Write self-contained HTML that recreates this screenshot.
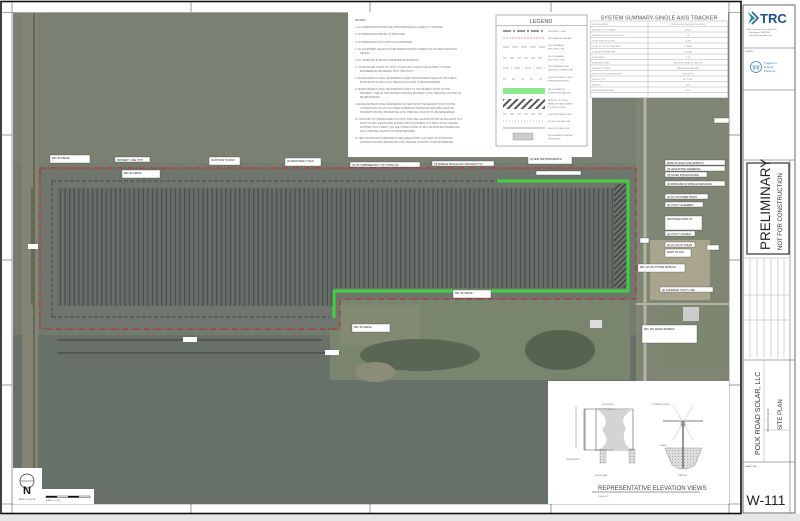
<!DOCTYPE html>
<html><head><meta charset="utf-8"><style>
html,body{margin:0;padding:0;background:#fff;}
svg{display:block;font-family:"Liberation Sans",sans-serif;}
</style></head><body>
<svg width="800" height="521" viewBox="0 0 800 521" xmlns="http://www.w3.org/2000/svg">
<defs>
<pattern id="rows" width="4.6" height="10" patternUnits="userSpaceOnUse">
<rect width="4.6" height="10" fill="#686d69"/>
<rect x="0" width="1.2" height="10" fill="#484e4c"/>
</pattern>
<pattern id="hatch" width="4" height="4" patternUnits="userSpaceOnUse" patternTransform="rotate(45)">
<rect width="4" height="4" fill="#6a706a"/><rect width="1" height="4" fill="#333"/>
</pattern>
<pattern id="lhatch" width="5" height="5" patternUnits="userSpaceOnUse" patternTransform="rotate(45)">
<rect width="5" height="5" fill="#fff"/><rect width="2" height="5" fill="#555"/>
</pattern>
<pattern id="dots" width="3" height="3" patternUnits="userSpaceOnUse">
<rect width="3" height="3" fill="#ddd"/><rect width="1" height="1" fill="#aaa"/>
</pattern>
</defs>
<rect width="800" height="521" fill="#fff"/>
<rect x="0" y="514" width="800" height="7" fill="#e6e6e6"/>
<rect x="1" y="1.5" width="740" height="512" fill="none" stroke="#111" stroke-width="1.6"/>
<line x1="12" y1="2" x2="12" y2="513" stroke="#555" stroke-width="0.6"/>
<line x1="1" y1="12.5" x2="741" y2="12.5" stroke="#555" stroke-width="0.6"/>
<line x1="1" y1="504" x2="741" y2="504" stroke="#555" stroke-width="0.6"/>
<line x1="729" y1="2" x2="729" y2="513" stroke="#555" stroke-width="0.6"/>
<g stroke="#555" stroke-width="0.6">
<line x1="191" y1="2" x2="191" y2="12"/><line x1="370" y1="2" x2="370" y2="12"/><line x1="551" y1="2" x2="551" y2="12"/>
<line x1="191" y1="504" x2="191" y2="513"/><line x1="370" y1="504" x2="370" y2="513"/><line x1="551" y1="504" x2="551" y2="513"/>
<line x1="1" y1="135" x2="12" y2="135"/><line x1="1" y1="260" x2="12" y2="260"/><line x1="1" y1="385" x2="12" y2="385"/>
<line x1="729" y1="135" x2="741" y2="135"/><line x1="729" y1="260" x2="741" y2="260"/><line x1="729" y1="385" x2="741" y2="385"/>
</g>
<rect x="13" y="13" width="716" height="491" fill="#757c6e"/>
<rect x="13" y="13" width="716" height="150" fill="#7b8172"/>
<rect x="13" y="335" width="716" height="169" fill="#67716a"/>
<rect x="330" y="300" width="300" height="80" fill="#7a8570"/>
<rect x="340" y="305" width="80" height="40" fill="#828a72"/>
<ellipse cx="420" cy="355" rx="60" ry="16" fill="#586653"/>
<ellipse cx="560" cy="350" rx="35" ry="20" fill="#55634f"/>
<ellipse cx="375" cy="372" rx="20" ry="10" fill="#8c8c7a"/>
<rect x="636" y="13" width="93" height="491" fill="#808674"/>
<rect x="650" y="240" width="60" height="60" fill="#a9a58f"/>
<rect x="660" y="310" width="69" height="60" fill="#7d876f"/>
<rect x="22" y="13" width="16" height="491" fill="#838572"/>
<line x1="34" y1="13" x2="34" y2="504" stroke="#5b6058" stroke-width="1.5"/>
<line x1="645" y1="13" x2="645" y2="504" stroke="#b4b4a4" stroke-width="3"/>
<line x1="636" y1="304" x2="729" y2="304" stroke="#b4b4a4" stroke-width="2"/>
<rect x="590" y="320" width="12" height="8" fill="#ddd"/>
<rect x="683" y="307" width="16" height="14" fill="#ccc"/>
<rect x="40" y="168" width="596" height="131" fill="#70756e"/>
<rect x="40" y="299" width="300" height="31" fill="#70756e"/>
<rect x="57" y="188" width="277" height="118" fill="url(#rows)"/>
<rect x="334" y="188" width="280" height="100" fill="url(#rows)"/>
<rect x="614" y="184" width="14" height="104" fill="url(#hatch)"/>
<g stroke="#222" stroke-width="0.5" stroke-dasharray="4 2">
<line x1="52" y1="181" x2="628" y2="181"/>
<line x1="52" y1="181" x2="52" y2="317"/>
<line x1="52" y1="317" x2="330" y2="317"/>
</g>
<path d="M497 181 H628 V291 H334 V318" fill="none" stroke="#3fd23f" stroke-width="3"/>
<path d="M40 168 H636 V299 H340 V329 H40 Z" fill="none" stroke="#c0272d" stroke-width="1" stroke-dasharray="6 2 1 2"/>
<g stroke="#111" stroke-width="0.5">
<line x1="32" y1="188" x2="32" y2="305"/><line x1="57" y1="340" x2="322" y2="340"/>
<line x1="57" y1="353" x2="340" y2="353"/>
</g>
<g font-size="2.6" fill="#222">
<rect x="28" y="244" width="10" height="5" fill="#fff"/>
<rect x="183" y="337" width="14" height="5" fill="#fff"/>
<rect x="325" y="350" width="14" height="5" fill="#fff"/>
</g>
<g fill="#fff" stroke="#333" stroke-width="0.3">
<rect x="50" y="155" width="40" height="8"/><rect x="115" y="157" width="35" height="5"/>
<rect x="122" y="170" width="38" height="8"/><rect x="209" y="157" width="31" height="8"/>
<rect x="285" y="158" width="36" height="8"/><rect x="350" y="162" width="70" height="5"/>
<rect x="432" y="161" width="62" height="5"/><rect x="528" y="156" width="44" height="8"/>
<rect x="536" y="171" width="45" height="4"/><rect x="352" y="324" width="38" height="8"/>
<rect x="453" y="290" width="38" height="8"/>
<rect x="665" y="160" width="60" height="5"/><rect x="665" y="166" width="60" height="5"/>
<rect x="665" y="172" width="42" height="5"/><rect x="665" y="181" width="60" height="5"/>
<rect x="665" y="194" width="43" height="5"/><rect x="665" y="202" width="38" height="5"/>
<rect x="665" y="216" width="37" height="14"/><rect x="665" y="231" width="30" height="5"/>
<rect x="665" y="242" width="30" height="5"/><rect x="665" y="249" width="26" height="8"/>
<rect x="638" y="264" width="47" height="8"/><rect x="660" y="287" width="53" height="5"/>
<rect x="642" y="325" width="55" height="18"/>
<rect x="714" y="118" width="15" height="5"/><rect x="707" y="245" width="12" height="5"/>
<rect x="640" y="238" width="9" height="5"/>
</g>
<g font-size="2.4" fill="#222">
<text x="52" y="159">MIN. 50' FENCE</text><text x="124" y="174">MIN. 50' FENCE</text>
<text x="117" y="161">PROPERTY LINE (TYP)</text><text x="211" y="161">30-35' ROW TO ROW</text>
<text x="287" y="162">(N) PROPOSED 7' HIGH</text><text x="352" y="166">(N) DC COMBINER BOX, TYP. (TOTAL XX)</text>
<text x="434" y="165">(N) MODULE SINGLE AXIS TRACKER (TYP)</text><text x="530" y="160">(2) NEW SWITCHBOARDS &amp;</text>
<text x="354" y="328">MIN. 50' FENCE</text><text x="455" y="294">MIN. 50' FENCE</text>
<text x="667" y="164">EDGE OF ROAD LINE (APPROX.)</text><text x="667" y="170">(N) VEGETATIVE SCREENING</text>
<text x="667" y="176">(N) GATED SITE ENTRANCE</text><text x="667" y="185">(N) IMPROVED 20' WIDE ACCESS ROAD</text>
<text x="667" y="198">(4) (N) CUSTOMER POLES</text><text x="667" y="206">(N) UTILITY EASEMENT</text>
<text x="667" y="220">PROPOSED POINT OF</text><text x="667" y="235">(N) UTILITY CONDUIT</text>
<text x="667" y="246">(4) (N) UTILITY POLES</text><text x="667" y="253">RIGHT OF WAY</text>
<text x="640" y="268">MIN. 175-25' SYSTEM SETBACK</text><text x="662" y="291">(E) OVERHEAD UTILITY LINE</text>
<text x="644" y="330">MIN. 150' FENCE SETBACK</text>
</g>
<rect x="348" y="12" width="244" height="145" fill="#fff"/>
<text x="355" y="21" font-size="3" fill="#444">NOTES:</text>
<g font-size="2.4" fill="#777">
<text x="355" y="28">1.  ALL DIMENSIONS SHOWN ARE APPROXIMATE AND SUBJECT TO CHANGE.</text>
<text x="355" y="35">2.  NO PERMANENT PARKING IS PROPOSED.</text>
<text x="355" y="43">3.  NO PERMANENT SITE LIGHTING IS PROPOSED.</text>
<text x="355" y="50">4.  ALL EQUIPMENT SELECTION AND SPECIFICATIONS SUBJECT TO CHANGE WITH FINAL</text>
<text x="360" y="54">DESIGN.</text>
<text x="355" y="61">5.  ALL SETBACKS IN DESIGN ARE MINIMUM SETBACKS.</text>
<text x="355" y="68">6.  LOCATION AND COUNT OF UTILITY POLES ARE TYPICAL AND SUBJECT TO FINAL</text>
<text x="360" y="72">ENGINEERING AND DESIGN WITH THE UTILITY.</text>
<text x="355" y="79">7.  FENCE SETBACK SHALL BE MINIMUM 25 FEET FROM NEAREST EDGE OF THE PUBLIC</text>
<text x="360" y="83">ROAD RIGHT OF WAY (AHJ). PRECISE LOCATION TO BE DETERMINED.</text>
<text x="355" y="90">8.  FENCE SETBACK SHALL BE MINIMUM 50 FEET TO THE NEAREST POINT ON THE</text>
<text x="360" y="94">PROPERTY LINE OF THE NONPARTICIPATING PROPERTY (AHJ). PRECISE LOCATION TO</text>
<text x="360" y="98">BE DETERMINED.</text>
<text x="355" y="105">9.  FENCE SETBACK SHALL BE MINIMUM 150 FEET FROM THE NEAREST POINT ON THE</text>
<text x="360" y="109">OUTSIDE WALL OF ANY OCCUPIED COMMUNITY BUILDINGS AND DWELLINGS ON</text>
<text x="360" y="113">NONPARTICIPATING PROPERTIES (AHJ). PRECISE LOCATION TO BE DETERMINED.</text>
<text x="355" y="120">10. THE POINT OF INTERCONNECTION (POI) SHALL BE LOCATED WITHIN OR ADJACENT TO A</text>
<text x="360" y="124">RIGHT OF WAY OR EXISTING POWER LINE AS POSSIBLE, BUT SHALL IN NO CASE BE</text>
<text x="360" y="128">FURTHER THAN TWENTY (20) FEET FROM A ROAD OF WAY OR EXISTING POWER LINE</text>
<text x="360" y="132">(AHJ). PRECISE LOCATION TO BE DETERMINED.</text>
<text x="355" y="139">11. NEW VEGETATIVE SCREENING IS REQUIRED WITHIN 1,000 FEET OF AN EXISTING</text>
<text x="360" y="143">NONPARTICIPATING RESIDENCE (AHJ). PRECISE LOCATION TO BE DETERMINED.</text>
</g>
<rect x="496" y="15" width="91" height="131" fill="#fff" stroke="#666" stroke-width="0.5"/>
<text x="541" y="23" font-size="5.5" fill="#555" text-anchor="middle">LEGEND</text>
<line x1="496" y1="25.5" x2="587" y2="25.5" stroke="#666" stroke-width="0.4"/>
<g stroke-width="0.6" fill="none">
<line x1="503" y1="31" x2="545" y2="31" stroke="#333" stroke-dasharray="8 2 2 2" stroke-width="0.9"/>
<line x1="503" y1="38" x2="545" y2="38" stroke="#d33" stroke-dasharray="2 1"/>
<line x1="503" y1="47" x2="545" y2="47" stroke="#777" stroke-dasharray="6 3"/>
<line x1="503" y1="58" x2="545" y2="58" stroke="#777" stroke-dasharray="4 3"/>
<line x1="503" y1="68" x2="545" y2="68" stroke="#777" stroke-dasharray="6 2 1 2"/>
<line x1="503" y1="79" x2="545" y2="79" stroke="#777" stroke-dasharray="3 6"/>
<line x1="503" y1="114" x2="545" y2="114" stroke="#777" stroke-dasharray="4 3"/>
<line x1="503" y1="121" x2="545" y2="121" stroke="#777" stroke-dasharray="1 2"/>
<line x1="503" y1="128" x2="545" y2="128" stroke="#555"/>
</g>
<rect x="503" y="88" width="42" height="6" fill="#8be88b"/>
<rect x="503" y="99" width="42" height="10" fill="url(#lhatch)"/>
<rect x="513" y="133" width="20" height="7" fill="#ccc" stroke="#888" stroke-width="0.4"/>
<g font-size="2.2" fill="#777">
<text x="548" y="32">PROPERTY LINE</text><text x="548" y="39">SITE AREA BOUNDARY</text>
<text x="548" y="46">(N) OVERHEAD</text><text x="548" y="49.5">ELECTRIC LINE</text>
<text x="548" y="57">(E) OVERHEAD</text><text x="548" y="60.5">ELECTRIC LINE</text>
<text x="548" y="67">(N) UNDERGROUND</text><text x="548" y="70.5">MEDIUM VOLTAGE LINE</text>
<text x="548" y="78">(N) PROPOSED 7' HIGH</text><text x="548" y="81.5">PERIMETER FENCE</text>
<text x="548" y="90">(N) VEGETATIVE</text><text x="548" y="93.5">SCREENING (AHJ/UP)</text>
<text x="548" y="101">APPROX. 30' X 800'</text><text x="548" y="104.5">PANEL SETBACK AREA</text><text x="548" y="108">TO FENCE (SUP)</text>
<text x="548" y="115">FENCE SETBACK LINE</text><text x="548" y="122">EDGE OF ROAD LINE</text>
<text x="548" y="129">RIGHT OF WAY LINE</text>
<text x="548" y="136">(E) NONPARTICIPATING</text><text x="548" y="139.5">RESIDENCE</text>
</g>
<rect x="590" y="12" width="138" height="86" fill="#fff"/>
<text x="659" y="19.5" font-size="5.6" fill="#555" text-anchor="middle">SYSTEM SUMMARY-SINGLE AXIS TRACKER</text>
<g stroke="#999" stroke-width="0.4">
<rect x="590.5" y="21" width="137" height="76.5" fill="none"/>
<line x1="648" y1="21" x2="648" y2="97.5"/>
<line x1="590" y1="26.5" x2="728" y2="26.5"/><line x1="590" y1="32" x2="728" y2="32"/>
<line x1="590" y1="37.5" x2="728" y2="37.5"/><line x1="590" y1="43" x2="728" y2="43"/>
<line x1="590" y1="48.5" x2="728" y2="48.5"/><line x1="590" y1="54" x2="728" y2="54"/>
<line x1="590" y1="59.5" x2="728" y2="59.5"/><line x1="590" y1="65" x2="728" y2="65"/>
<line x1="590" y1="70.5" x2="728" y2="70.5"/><line x1="590" y1="76" x2="728" y2="76"/>
<line x1="590" y1="81.5" x2="728" y2="81.5"/><line x1="590" y1="87" x2="728" y2="87"/>
<line x1="590" y1="92.5" x2="728" y2="92.5"/>
</g>
<g font-size="2" fill="#888">
<text x="592" y="25">MODULE MODEL</text><text x="592" y="30.5">MODULE STC DC RATING</text><text x="592" y="36">MODULES PER SOURCE CIRCUIT</text>
<text x="592" y="41.5">TOTAL MODULE COUNT</text><text x="592" y="47">TOTAL STC DC SYSTEM SIZE</text><text x="592" y="52.5">TOTAL AC SYSTEM SIZE</text>
<text x="592" y="58">DC/AC RATIO</text><text x="592" y="63.5">INVERTER MODEL</text><text x="592" y="69">RACKING SYSTEM</text>
<text x="592" y="74.5">ROW TO ROW SPACING [GCR]</text><text x="592" y="80">MODULE TILT</text><text x="592" y="85.5">AZIMUTH</text>
<text x="592" y="91">SITE AREA (ACREAGE)</text>
<g text-anchor="middle"><text x="688" y="25">JINKO SOLAR JKM-580N-72HL4-BDV</text><text x="688" y="30.5">580 W</text><text x="688" y="36">28</text>
<text x="688" y="41.5">13,832</text><text x="688" y="47">7.73 MW</text><text x="688" y="52.5">5.00 MW</text><text x="688" y="58">1.55</text>
<text x="688" y="63.5">(40) SOLECTRIA XGI 1500-125</text><text x="688" y="69">SINGLE AXIS TRACKER</text><text x="688" y="74.5">30.65' [37%]</text>
<text x="688" y="80">60° TO 60°</text><text x="688" y="85.5">180°</text><text x="688" y="91">36.1 ±</text></g>
</g>
<rect x="548" y="381" width="181" height="123" fill="#fff"/>
<path d="M584 409 L612 409 L612 450 L584 450 Z" fill="#fff" stroke="#555" stroke-width="0.5"/>
<line x1="585" y1="409" x2="585" y2="450" stroke="#555" stroke-width="0.6"/>
<line x1="576" y1="406" x2="576" y2="448" stroke="#555" stroke-width="0.4"/>
<rect x="600" y="449" width="6" height="14" fill="url(#dots)" stroke="#777" stroke-width="0.3"/>
<rect x="629" y="449" width="6" height="14" fill="url(#dots)" stroke="#777" stroke-width="0.3"/>
<line x1="633" y1="409" x2="633" y2="450" stroke="#555" stroke-width="0.6"/>
<line x1="595" y1="409" x2="633" y2="409" stroke="#555" stroke-width="0.6"/>
<line x1="595" y1="450" x2="633" y2="450" stroke="#555" stroke-width="0.6"/>
<path d="M596 409 Q612 418 602 430 Q612 442 600 449 L630 449 Q620 440 626 428 Q618 418 632 410 Z" fill="#d4d4d4"/>
<line x1="596" y1="409" x2="596" y2="450" stroke="#555" stroke-width="0.6"/>
<path d="M665 448 L702 448 L695 465 Q683 473 672 465 Z" fill="url(#dots)" stroke="#777" stroke-width="0.4"/>
<line x1="663" y1="421" x2="703" y2="421" stroke="#555" stroke-width="0.8"/>
<line x1="683" y1="421" x2="683" y2="468" stroke="#555" stroke-width="1.2"/>
<circle cx="683" cy="424" r="2" fill="none" stroke="#555" stroke-width="0.6"/>
<g stroke="#888" stroke-width="0.4" stroke-dasharray="2 1"><line x1="673" y1="405" x2="693" y2="440"/><line x1="693" y1="405" x2="673" y2="440"/></g>
<g font-size="1.8" fill="#666"><text x="602" y="405">POSTS EMBT</text><text x="652" y="405">4" DIAMETER WOOD</text>
<text x="566" y="460">TENSION WIRE</text><text x="595" y="476">FENCE DETAIL</text><text x="678" y="476">TRACKER</text><text x="660" y="446">GRADE</text></g>
<text x="598" y="490" font-size="6" fill="#444">REPRESENTATIVE ELEVATION VIEWS</text>
<line x1="592" y1="492" x2="700" y2="492" stroke="#333" stroke-width="0.6"/>
<text x="598" y="497" font-size="1.8" fill="#666">SCALE: NTS</text>
<rect x="13" y="468" width="29" height="36" fill="#fff"/>
<circle cx="27" cy="481" r="7" fill="none" stroke="#333" stroke-width="0.7"/>
<line x1="20" y1="481" x2="34" y2="481" stroke="#333" stroke-width="0.5"/>
<text x="27" y="494" font-size="11" fill="#111" text-anchor="middle" font-weight="bold">N</text>
<text x="27" y="500" font-size="2" fill="#444" text-anchor="middle">APPROX. NORTH</text>
<rect x="42" y="489" width="52" height="15" fill="#fff"/>
<rect x="46" y="496" width="44" height="1.5" fill="#fff" stroke="#111" stroke-width="0.4"/>
<rect x="46" y="496" width="11" height="1.5" fill="#111"/><rect x="68" y="496" width="11" height="1.5" fill="#111"/>
<text x="46" y="501" font-size="1.8" fill="#444">SCALE: 1" = 100'</text>
<rect x="743" y="5" width="52" height="508" fill="#fff" stroke="#444" stroke-width="0.8"/>
<g stroke="#555" stroke-width="0.5">
<line x1="743" y1="48" x2="795" y2="48"/><line x1="743" y1="90" x2="795" y2="90"/>
<line x1="743" y1="160" x2="795" y2="160"/><line x1="743" y1="360" x2="795" y2="360"/>
<line x1="743" y1="462" x2="795" y2="462"/>
<line x1="790" y1="160" x2="790" y2="513"/>
</g>
<rect x="747" y="163" width="42" height="91" fill="#fff" stroke="#333" stroke-width="1.2"/>
<text transform="translate(770 250) rotate(-90)" font-size="13.5" fill="#222">PRELIMINARY</text>
<text transform="translate(782 250) rotate(-90)" font-size="6" fill="#333">NOT FOR CONSTRUCTION</text>
<g stroke="#777" stroke-width="0.3">
<line x1="743" y1="258" x2="790" y2="258"/>
<line x1="750" y1="258" x2="750" y2="358"/><line x1="757" y1="258" x2="757" y2="358"/>
<line x1="764" y1="258" x2="764" y2="358"/><line x1="771" y1="258" x2="771" y2="358"/>
<line x1="778" y1="258" x2="778" y2="358"/><line x1="784" y1="258" x2="784" y2="358"/>
<line x1="743" y1="295" x2="790" y2="295"/><line x1="743" y1="320" x2="790" y2="320"/>
<line x1="764" y1="430" x2="790" y2="430"/><line x1="764" y1="360" x2="764" y2="462"/>
</g>
<path d="M748 12 L755 18 L748 24 L751 18 Z" fill="#1b8f8a"/>
<path d="M752 12 L758 18 L752 24" fill="none" stroke="#2a5ea8" stroke-width="1.6"/>
<text x="760" y="23" font-size="13" font-weight="bold" fill="#1d4e92">TRC</text>
<g font-size="2" fill="#666"><text x="747" y="30">1865 Commerce Drive, Suite 100</text><text x="749" y="33">Sacramento, CA 95834</text><text x="749" y="36">www.TRCcompanies.com</text></g>
<text x="745" y="52" font-size="2.2" fill="#444">CLIENT</text>
<circle cx="756" cy="67" r="5.5" fill="none" stroke="#3a7fc1" stroke-width="0.8"/>
<path d="M752 66 H760 M753 68 H759 M754 66 V70 M758 66 V70" stroke="#3a7fc1" stroke-width="0.6"/>
<g font-size="3" fill="#3a7fc1"><text x="764" y="64">Trajectory</text><text x="764" y="68">Energy</text><text x="764" y="72">Partners</text></g>
<text transform="translate(760 455) rotate(-90)" font-size="7" fill="#333">POLK ROAD SOLAR, LLC</text>
<text transform="translate(769 432) rotate(-90)" font-size="2.4" fill="#555">PROJECT ADDRESS</text>
<text transform="translate(782 430) rotate(-90)" font-size="6" fill="#333">SITE PLAN</text>
<text x="745" y="467" font-size="2.2" fill="#444">SHEET NO.</text>
<text x="766" y="505" font-size="14" fill="#222" text-anchor="middle">W-111</text>
</svg>
</body></html>
